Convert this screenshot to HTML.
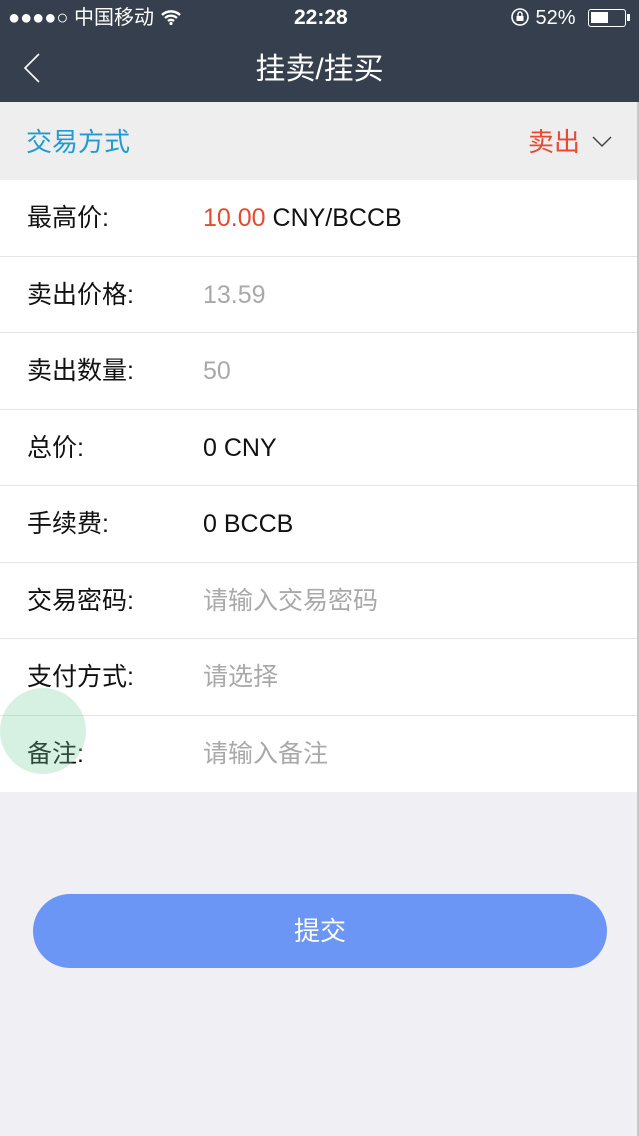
<!DOCTYPE html>
<html><head><meta charset="utf-8"><style>
*{margin:0;padding:0;box-sizing:border-box}
body{width:639px;height:1136px;background:#efeff4;font-family:"Liberation Sans","Noto Sans CJK SC",sans-serif;position:relative;overflow:hidden}
.top{position:absolute;left:0;top:0;width:639px;height:102px;background:#363f4e;color:#fff}
.sb{position:absolute;top:4px;font-size:20px;line-height:28px;height:28px}
.title{position:absolute;top:50px;width:100%;text-align:center;font-size:30px;line-height:40px}
.sel{position:absolute;top:102px;height:78px;width:639px;background:#eeeeee}
.rows{position:absolute;top:180px;left:0;width:637px;background:#fff}
.row{height:76.5px;border-bottom:1px solid #e4e4e4;position:relative;font-size:25px;line-height:76px}
.row:last-child{border-bottom:none}
.l{position:absolute;left:27px;top:0;color:#111}
.v{position:absolute;left:203px;top:0;color:#111}
.g{color:#a9a9a9}
.btn{position:absolute;left:33px;top:894px;width:574px;height:74px;border-radius:37px;background:#6b96f5;color:#fff;font-size:26px;text-align:center;line-height:74px}
.edge{position:absolute;right:0;top:102px;width:2px;height:1034px;background:#c8c8c8}
</style></head><body>
<div class="top">
<div class="sb" style="left:8px">●●●●○ 中国移动
<svg width="22" height="16" viewBox="0 0 22 16" style="vertical-align:-1px"><path d="M2 6a13 13 0 0 1 18 0M5 9a9 9 0 0 1 12 0M8 12a4.5 4.5 0 0 1 6 0" stroke="#fff" stroke-width="2.4" fill="none"/><circle cx="11" cy="14.5" r="1.6" fill="#fff"/></svg></div>
<div class="sb" style="left:294px;font-weight:bold;font-size:21px">22:28</div>
<div class="sb" style="left:510px"><svg width="20" height="20" viewBox="0 0 20 20" style="vertical-align:-3px"><circle cx="10" cy="10" r="8" stroke="#fff" stroke-width="1.6" fill="none"/><rect x="6.5" y="9" width="7" height="5" fill="#fff"/><path d="M8 9V7a2 2 0 0 1 4 0v2" stroke="#fff" stroke-width="1.4" fill="none"/></svg> 52%</div>
<div style="position:absolute;left:588px;top:9px;width:38px;height:18px;border:1.5px solid #fff;border-radius:3px"><div style="margin:2px;width:17px;height:11px;background:#fff"></div></div>
<div style="position:absolute;left:627px;top:14px;width:3px;height:7px;background:#fff"></div>
<svg style="position:absolute;left:22px;top:52px" width="20" height="32" viewBox="0 0 20 32"><path d="M17 2 3 16l14 14" stroke="#fff" stroke-width="1.6" fill="none"/></svg>
<div class="title">挂卖/挂买</div>
</div>
<div class="sel">
<div style="position:absolute;left:26px;top:20px;font-size:26px;line-height:40px;color:#1f9ad6">交易方式</div>
<div style="position:absolute;left:528px;top:20px;font-size:26px;line-height:40px;color:#e8492f">卖出</div>
<svg style="position:absolute;left:592px;top:34px" width="20" height="12" viewBox="0 0 20 12"><path d="M1 1l9 9 9-9" stroke="#444" stroke-width="1.5" fill="none"/></svg>
</div>
<div class="rows">
<div class="row"><span class="l">最高价:</span><span class="v"><span style="color:#e8492f">10.00</span> CNY/BCCB</span></div>
<div class="row"><span class="l">卖出价格:</span><span class="v g">13.59</span></div>
<div class="row"><span class="l">卖出数量:</span><span class="v g">50</span></div>
<div class="row"><span class="l">总价:</span><span class="v">0 CNY</span></div>
<div class="row"><span class="l">手续费:</span><span class="v">0 BCCB</span></div>
<div class="row"><span class="l">交易密码:</span><span class="v g">请输入交易密码</span></div>
<div class="row"><span class="l">支付方式:</span><span class="v g">请选择</span></div>
<div class="row"><span class="l">备注:</span><span class="v g">请输入备注</span></div>
</div>
<div style="position:absolute;left:0;top:688px;width:86px;height:86px;border-radius:50%;background:rgba(120,210,160,0.3)"></div>
<div class="edge"></div>
<div class="btn">提交</div>
</body></html>
